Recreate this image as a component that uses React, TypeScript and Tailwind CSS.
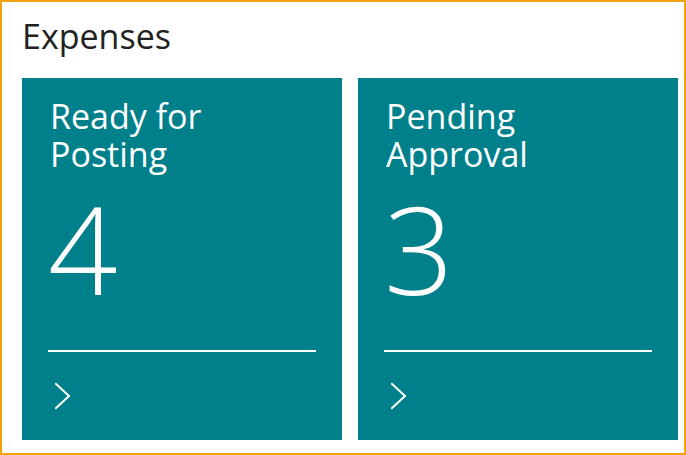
import React from "react";

function Chevron() {
  return (
    <svg width="18" height="28" viewBox="0 0 18 28" fill="none">
      <polyline points="2,2 15,14 2,26" stroke="white" strokeWidth="2" strokeLinecap="square" />
    </svg>
  );
}

function Tile({ l1, l2, n }: { l1: string; l2: string; n: string }) {
  return (
    <div className="w-[320px] h-[362px] bg-[#00808a] flex flex-col px-[26px] pt-[19px] text-white">
      <div className="text-[34px] leading-[38px] pl-[2px]">
        <div>{l1}</div>
        <div>{l2}</div>
      </div>
      <div className="mt-[14px] h-[122px] text-[122px] leading-[122px] font-light">{n}</div>
      <div className="mt-[41px] h-[2px] bg-white" />
      <div className="mt-[30px] pl-[6px] h-[28px]">
        <Chevron />
      </div>
    </div>
  );
}

export default function App() {
  return (
    <div
      className="w-[686px] h-[455px] border-2 border-[#f0a30a] bg-white flex flex-col"
      style={{ fontFamily: '"Open Sans", "Noto Sans", sans-serif' }}
    >
      <div className="pl-[20px] pt-[14px] h-[76px] text-[34px] leading-[40px] text-[#212121]">Expenses</div>
      <div className="flex gap-[16px] pl-[20px]">
        <Tile l1="Ready for" l2="Posting" n="4" />
        <Tile l1="Pending" l2="Approval" n="3" />
      </div>
    </div>
  );
}
